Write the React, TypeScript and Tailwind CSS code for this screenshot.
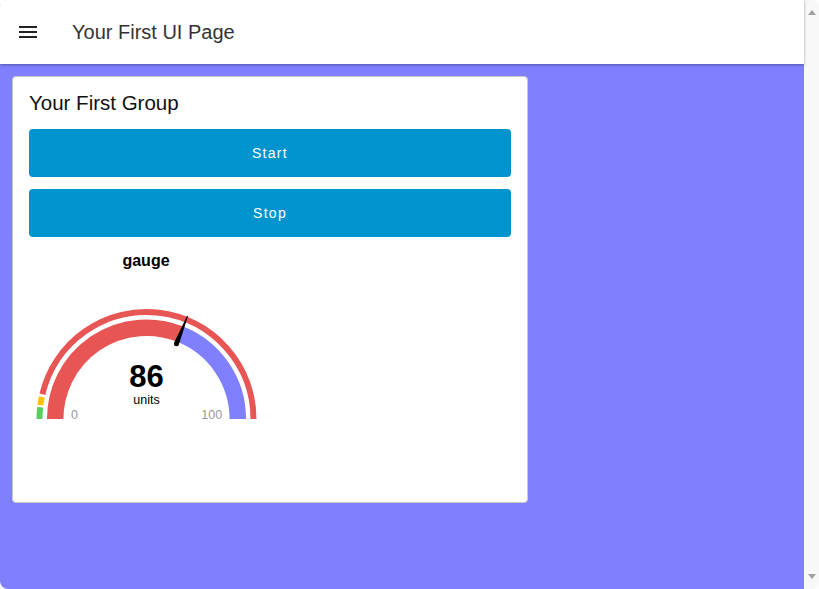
const CX = 117.5;
const CY = 146;

// angle measured from the left end of the gauge, sweeping over the top
function pt(r: number, deg: number) {
  const a = (deg * Math.PI) / 180;
  return { x: CX - r * Math.cos(a), y: CY - r * Math.sin(a) };
}

function arc(r: number, from: number, to: number) {
  const p0 = pt(r, from);
  const p1 = pt(r, to);
  const large = to - from > 180 ? 1 : 0;
  return `M ${p0.x} ${p0.y} A ${r} ${r} 0 ${large} 1 ${p1.x} ${p1.y}`;
}

function Needle({ deg }: { deg: number }) {
  const a = (deg * Math.PI) / 180;
  const dx = -Math.cos(a);
  const dy = -Math.sin(a);
  const px = -dy;
  const py = dx;
  const base = { x: CX + 81 * dx, y: CY + 81 * dy };
  const tip = { x: CX + 111 * dx, y: CY + 111 * dy };
  const points = [
    `${base.x + px * 2.5},${base.y + py * 2.5}`,
    `${tip.x + px * 0.5},${tip.y + py * 0.5}`,
    `${tip.x - px * 0.5},${tip.y - py * 0.5}`,
    `${base.x - px * 2.5},${base.y - py * 2.5}`,
  ].join(" ");
  return (
    <g fill="#000">
      <polygon points={points} />
      <circle cx={base.x} cy={base.y} r={2.5} />
    </g>
  );
}

function MenuIcon() {
  return (
    <svg width={24} height={24} viewBox="0 0 24 24" className="ml-4 shrink-0">
      <path d="M3 18h18v-2H3v2zm0-5h18v-2H3v2zm0-7v2h18V6H3z" fill="#222" />
    </svg>
  );
}

function Gauge() {
  const needleDeg = 111.7;
  return (
    <div className="flex w-[234px] flex-col">
      <div className="text-center text-[16px] font-bold leading-6 text-black">gauge</div>
      <svg width={234} height={160} viewBox="0 0 234 160">
        {/* segment ring */}
        <path d={arc(107, 0, 6.3)} stroke="#5ccd5c" strokeWidth={6} fill="none" />
        <path d={arc(107, 7.5, 12)} stroke="#ffc107" strokeWidth={6} fill="none" />
        <path d={arc(107, 13.4, 180)} stroke="#e85555" strokeWidth={6} fill="none" />
        {/* value arc */}
        <path d={arc(91.3, 0, needleDeg)} stroke="#e85555" strokeWidth={16.5} fill="none" />
        <path d={arc(91.3, needleDeg, 180)} stroke="#8080ff" strokeWidth={16.5} fill="none" />
        <Needle deg={needleDeg} />
        <text x={CX} y={113.5} textAnchor="middle" fontSize={31} fontWeight={700} fill="#000">
          86
        </text>
        <text x={CX} y={131} textAnchor="middle" fontSize={12.5} fill="#000">
          units
        </text>
        <text x={45.5} y={146} textAnchor="middle" fontSize={12.5} fill="#999">
          0
        </text>
        <text x={182.7} y={146} textAnchor="middle" fontSize={12.5} fill="#999">
          100
        </text>
      </svg>
    </div>
  );
}

export default function App() {
  return (
    <div
      className="flex h-[589px] w-full overflow-hidden rounded-lg bg-white"
      style={{ fontFamily: '"Liberation Sans", Arial, sans-serif' }}
    >
      <div className="flex flex-1 flex-col">
        <header className="relative z-10 flex h-16 shrink-0 items-center bg-white shadow-[0_1px_3px_rgba(0,0,0,0.35)]">
          <MenuIcon />
          <h1 className="ml-8 text-[20px] text-[#333]">Your First UI Page</h1>
        </header>
        <main className="flex-1 bg-[#8080ff] p-3">
          <div className="flex h-[427px] w-[516px] flex-col gap-3 rounded border border-[#c8c8c8] bg-white px-4 pt-3">
            <div className="text-[20.5px] leading-7 text-[#111]">Your First Group</div>
            <button className="h-12 rounded bg-[#0094ce] text-[14px] tracking-[1.3px] text-white">
              Start
            </button>
            <button className="h-12 rounded bg-[#0094ce] text-[14px] tracking-[1.3px] text-white">
              Stop
            </button>
            <Gauge />
          </div>
        </main>
      </div>
      <div className="flex w-[15px] shrink-0 flex-col items-center justify-between bg-[#f8f8f8] py-[10px]">
        <svg width={8} height={5} viewBox="0 0 8 5">
          <polygon points="0,5 8,5 4,0" fill="#a0a0a0" />
        </svg>
        <svg width={8} height={5} viewBox="0 0 8 5">
          <polygon points="0,0 8,0 4,5" fill="#a0a0a0" />
        </svg>
      </div>
    </div>
  );
}
